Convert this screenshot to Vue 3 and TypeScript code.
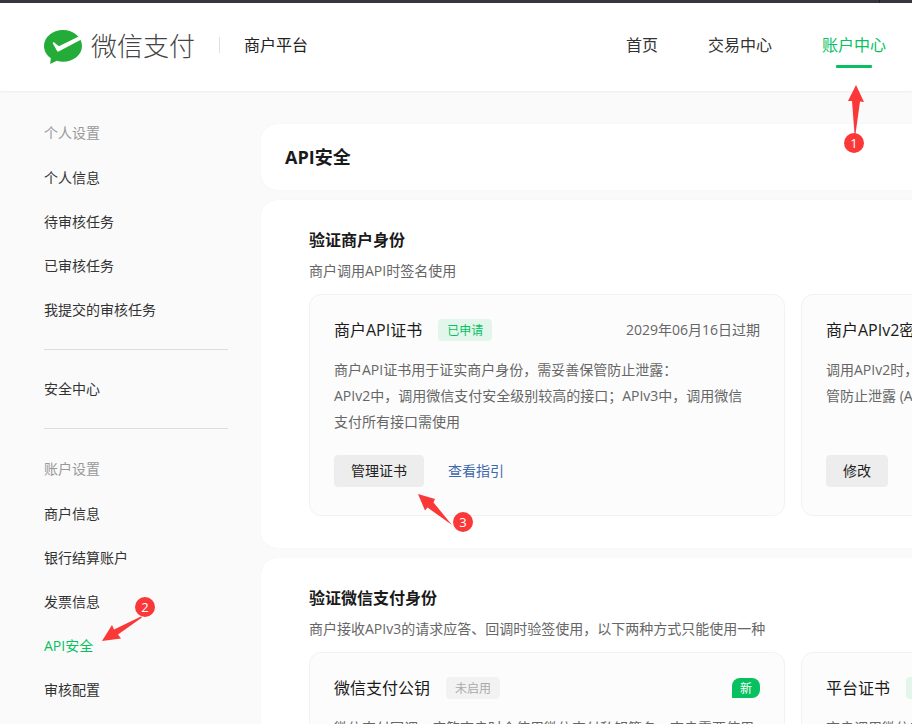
<script setup lang="ts">
interface NavItem {
  label: string
  active?: boolean
}

interface MenuGroup {
  title?: string
  items: NavItem[]
}

interface SecurityCard {
  title: string
  tag?: { text: string; tone: 'on' | 'off' }
  note?: string
  isNew?: boolean
  lines: string[]
  action: string
  link?: string
}

interface Section {
  title: string
  desc: string
  cards: SecurityCard[]
}

const topNav: NavItem[] = [
  { label: '首页' },
  { label: '交易中心' },
  { label: '账户中心', active: true },
]

const menu: MenuGroup[] = [
  {
    title: '个人设置',
    items: [
      { label: '个人信息' },
      { label: '待审核任务' },
      { label: '已审核任务' },
      { label: '我提交的审核任务' },
    ],
  },
  { items: [{ label: '安全中心' }] },
  {
    title: '账户设置',
    items: [
      { label: '商户信息' },
      { label: '银行结算账户' },
      { label: '发票信息' },
      { label: 'API安全', active: true },
      { label: '审核配置' },
    ],
  },
]

const sections: Section[] = [
  {
    title: '验证商户身份',
    desc: '商户调用API时签名使用',
    cards: [
      {
        title: '商户API证书',
        tag: { text: '已申请', tone: 'on' },
        note: '2029年06月16日过期',
        lines: [
          '商户API证书用于证实商户身份，需妥善保管防止泄露：',
          'APIv2中，调用微信支付安全级别较高的接口；APIv3中，调用微信',
          '支付所有接口需使用',
        ],
        action: '管理证书',
        link: '查看指引',
      },
      {
        title: '商户APIv2密钥',
        lines: ['调用APIv2时，需使用该密钥签名，需妥善保', '管防止泄露 (APIv3无需使用)'],
        action: '修改',
      },
    ],
  },
  {
    title: '验证微信支付身份',
    desc: '商户接收APIv3的请求应答、回调时验签使用，以下两种方式只能使用一种',
    cards: [
      {
        title: '微信支付公钥',
        tag: { text: '未启用', tone: 'off' },
        isNew: true,
        lines: ['微信支付回调、应答商户时会使用微信支付私钥签名，商户需要使用', '微信支付公钥验签'],
        action: '申请公钥',
      },
      {
        title: '平台证书',
        tag: { text: '已启用', tone: 'on' },
        lines: ['商户调用微信支付接口时使用'],
        action: '管理证书',
      },
    ],
  },
]
</script>

<template>
  <div class="page">
    <div class="strip"><span class="strip-mark"></span></div>
    <header class="header">
      <a class="brand" href="#">
        <svg class="brand-icon" viewBox="0 0 38 34" aria-hidden="true">
          <path
            fill="#23ac38"
            d="M19 0C8.500 0 0 7.100 0 15.900c0 4.900 2.600 9.200 6.800 12.100L6.200 34l6.600-3.200c2 .6 4 .9 6.200.9 10.500 0 19-7.100 19-15.800S29.500 0 19 0z"
          />
          <path
            fill="#fff"
            d="M8.900 12.700c.3-.5.900-.5 1.400-.1l3.600 2.900c.6.500 1.200.5 2 .2L35.200 6.300L37.300 9.500L14.600 21.500c-.7.300-1.200.1-1.500-.5L9 13.700c-.2-.4-.3-.7-.1-1z"
          />
        </svg>
        <span class="brand-name">微信支付</span>
      </a>
      <span class="platform">商户平台</span>
      <nav class="top-nav">
        <a
          v-for="item in topNav"
          :key="item.label"
          href="#"
          class="top-link"
          :class="{ active: item.active }"
          >{{ item.label }}</a
        >
      </nav>
    </header>

    <div class="body">
      <aside class="sidebar">
        <div v-for="(group, i) in menu" :key="i" class="group">
          <span v-if="group.title" class="group-title">{{ group.title }}</span>
          <a
            v-for="item in group.items"
            :key="item.label"
            href="#"
            class="side-link"
            :class="{ active: item.active }"
            >{{ item.label }}</a
          >
        </div>
      </aside>

      <main class="main">
        <div class="panel page-title">
          <h1>API安全</h1>
        </div>
        <section v-for="section in sections" :key="section.title" class="panel section">
          <h2>{{ section.title }}</h2>
          <p class="section-desc">{{ section.desc }}</p>
          <div class="cards">
            <article v-for="card in section.cards" :key="card.title" class="card">
              <div class="card-head">
                <h3>{{ card.title }}</h3>
                <span v-if="card.tag" class="tag" :class="card.tag.tone">{{ card.tag.text }}</span>
                <span v-if="card.note" class="note">{{ card.note }}</span>
                <span v-if="card.isNew" class="new">新</span>
              </div>
              <div class="card-text">
                <p v-for="line in card.lines" :key="line">{{ line }}</p>
              </div>
              <div class="card-actions">
                <button type="button">{{ card.action }}</button>
                <a v-if="card.link" href="#">{{ card.link }}</a>
              </div>
            </article>
          </div>
        </section>
      </main>
    </div>

    <svg class="steps" width="912" height="724" viewBox="0 0 912 724" aria-hidden="true">
      <path d="M856 85L864 102L860 101.500L855.500 134L854.500 134L852 101L848 101Z" />
      <circle cx="854" cy="143" r="10" />
      <text x="854" y="148">1</text>
      <path d="M102 641L112 625L114 629.500L141 616.500L142 617.500L118 634.500L121 638.500Z" />
      <circle cx="145" cy="607" r="10" />
      <text x="145" y="612">2</text>
      <path d="M418 494L435 499L433.500 502.500L452 525L427.500 507.500L425 510.500Z" />
      <circle cx="463" cy="522" r="10" />
      <text x="463" y="527">3</text>
    </svg>
  </div>
</template>

<style>
body {
  margin: 0;
  background: #fafafa;
}
</style>

<style scoped>
.page {
  position: relative;
  height: 100vh;
  overflow: hidden;
  background: #fafafa;
  color: #333;
  font-family: 'Open Sans', 'Noto Sans CJK SC', sans-serif;
  font-size: 14px;
  line-height: 20px;
}

a {
  color: inherit;
  text-decoration: none;
}

h1,
h2,
h3,
p {
  margin: 0;
}

.strip {
  display: flex;
  justify-content: flex-end;
  height: 3px;
  padding-right: 32px;
  background: #3a363f;
}

.strip-mark {
  width: 1px;
  background: #222;
}

.header {
  display: flex;
  align-items: center;
  height: 88px;
  padding: 0 26px 4px 44px;
  box-sizing: border-box;
  background: #fff;
  box-shadow: 0 1px 2px rgba(0, 0, 0, 0.06);
  font-size: 16px;
  line-height: 24px;
}

.brand {
  display: flex;
  align-items: flex-end;
  gap: 9px;
}

.brand-icon {
  width: 38px;
  height: 34px;
}

.brand-name {
  color: #444;
  font-family: 'Noto Sans CJK SC', sans-serif;
  font-size: 26px;
  font-weight: 300;
  line-height: 38px;
}

.platform {
  display: flex;
  align-items: center;
  color: #222;
}

.platform::before {
  content: '';
  width: 1px;
  height: 16px;
  margin: 0 24px;
  background: #e0e0e0;
}

.top-nav {
  display: flex;
  gap: 50px;
  margin-left: auto;
}

.top-link {
  position: relative;
}

.top-link.active {
  color: #07c160;
}

.top-link.active::after {
  content: '';
  position: absolute;
  bottom: -11px;
  left: 50%;
  width: 36px;
  height: 3px;
  margin-left: -18px;
  border-radius: 1px;
  background: #07c160;
}

.body {
  display: flex;
  align-items: flex-start;
  gap: 33px;
  padding-left: 44px;
}

.sidebar {
  flex: 0 0 184px;
  padding-top: 2px;
}

.group {
  display: flex;
  flex-direction: column;
  align-items: flex-start;
  gap: 24px;
  padding: 29px 0;
}

.group + .group {
  border-top: 1px solid #dedede;
}

.group-title {
  color: #999;
  line-height: 22px;
}

.side-link.active {
  color: #07c160;
}

.main {
  display: flex;
  flex: 1 0 auto;
  flex-direction: column;
  gap: 10px;
  padding-top: 33px;
}

.panel {
  border-radius: 16px;
  background: #fff;
  box-shadow: 0 0 1px rgba(0, 0, 0, 0.08);
}

.page-title {
  padding: 20px 24px;
}

h1 {
  color: #1a1a1a;
  font-size: 18px;
  line-height: 26px;
}

.section {
  padding: 28px 48px 32px;
}

h2 {
  color: #1a1a1a;
  font-size: 16px;
  line-height: 24px;
}

.section-desc {
  margin: 8px 0 12px;
  color: #666;
  line-height: 22px;
}

.cards {
  display: grid;
  grid-template-columns: repeat(2, 476px);
  gap: 16px;
}

.card {
  display: flex;
  flex-direction: column;
  padding: 24px 24px 28px;
  border: 1px solid #f2f2f2;
  border-radius: 12px;
  background: #fcfcfc;
}

.card-head {
  display: flex;
  align-items: center;
  height: 22px;
}

h3 {
  margin-right: 16px;
  color: #1a1a1a;
  font-size: 16px;
  font-weight: 400;
  line-height: 22px;
}

.tag {
  padding: 2px 9px 0;
  border-radius: 4px;
  font-size: 12px;
  line-height: 20px;
}

.tag.on {
  background: #e3f6ec;
  color: #07c160;
}

.tag.off {
  background: #f2f2f2;
  color: #aaa;
}

.note {
  margin-left: auto;
  color: #666;
}

.new {
  margin-left: auto;
  padding: 2px 8px 0;
  border-radius: 8px 8px 8px 0;
  background: #07c160;
  color: #fff;
  font-size: 12px;
  line-height: 18px;
}

.card-text {
  margin: 16px 0 20px;
  color: #666;
  line-height: 26px;
  white-space: nowrap;
}

.card-actions {
  display: flex;
  align-items: center;
  gap: 24px;
  margin-top: auto;
}

button {
  height: 32px;
  padding: 0 16px;
  border: 1px solid #ededed;
  border-radius: 4px;
  background: #ededed;
  color: #222;
  font: inherit;
  line-height: 20px;
}

.card-actions a {
  color: #3e68ad;
}

.steps {
  position: absolute;
  top: 0;
  left: 0;
  fill: #fb3838;
  pointer-events: none;
}

.steps text {
  fill: #fff;
  font-size: 13px;
  text-anchor: middle;
}
</style>
